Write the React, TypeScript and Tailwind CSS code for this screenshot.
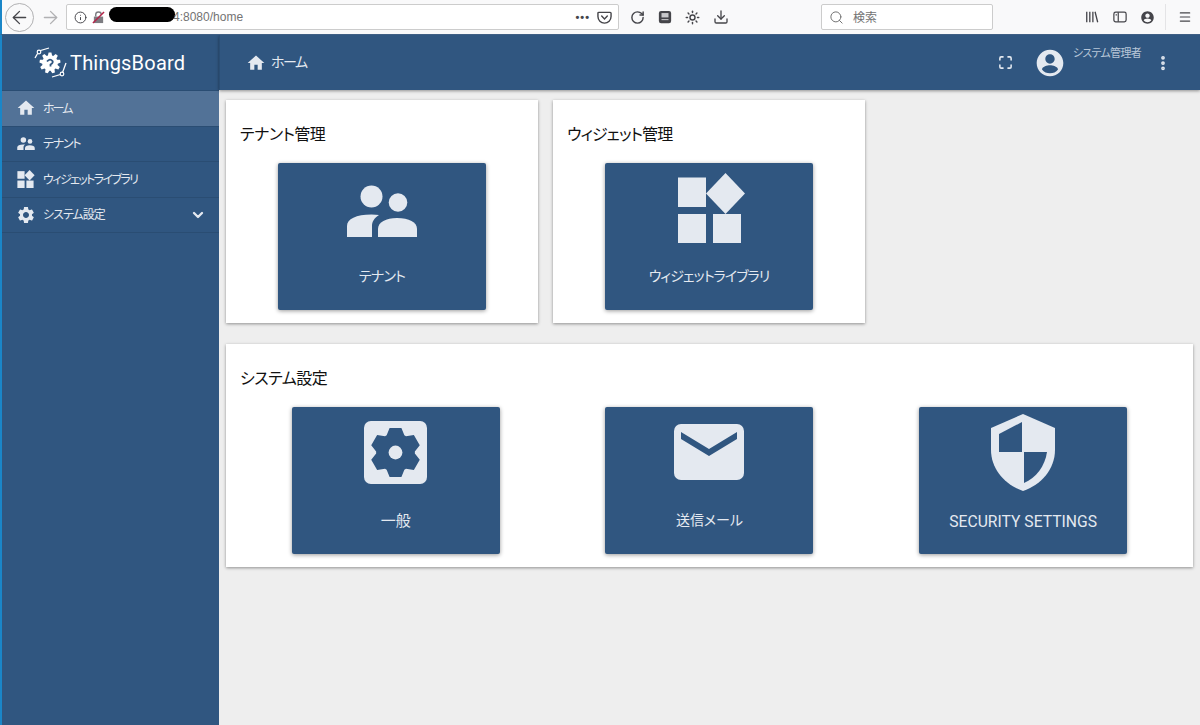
import { ChevronDown, Download, Info, RotateCw, Search, ArrowLeft, ArrowRight, Menu, EllipsisVertical, Maximize, Sun } from "lucide-react";

const font = "font-['Roboto','Noto_Sans_CJK_JP',sans-serif] [font-feature-settings:'palt']";

// gear outline with flat teeth, used by the logo and the "general" tile
const gearPath = (cx: number, cy: number, outer: number, inner: number, teeth: number, half: number) => {
  const pts: string[] = [];
  for (let i = 0; i < teeth; i++) {
    const a = (i * 2 * Math.PI) / teeth - Math.PI / 2;
    [
      [-half * 1.5, inner],
      [-half, outer],
      [half, outer],
      [half * 1.5, inner],
    ].forEach(([o, r]) => {
      pts.push(`${(cx + Math.cos(a) * r - Math.sin(a) * o).toFixed(2)} ${(cy + Math.sin(a) * r + Math.cos(a) * o).toFixed(2)}`);
    });
  }
  return `M${pts.join("L")}Z`;
};

const HomeIcon = ({ className }: { className: string }) => (
  <svg viewBox="0 0 24 24" className={className} fill="currentColor">
    <path d="M10 20v-6h4v6h5v-8h3L12 3 2 12h3v8z" />
  </svg>
);

const PeopleIcon = ({ className }: { className: string }) => (
  <svg viewBox="0 0 70 52" className={className} fill="currentColor">
    <circle cx="24.500" cy="11.500" r="11" />
    <circle cx="51" cy="17.500" r="9.300" />
    <path d="M0 52V41C0 34 9 29.500 24.500 29.500 Q29 29.500 32 30 C27 33 25 37 25 41V52Z" />
    <path d="M31 52V44C31 37 39 33 50 33 C62 33 70 37 70 44V52Z" />
  </svg>
);

const WidgetsIcon = ({ className }: { className: string }) => (
  <svg viewBox="0 0 67 70" className={className} fill="currentColor">
    <rect x="0" y="4.500" width="28" height="29.500" />
    <path d="M47.500 0 67 20.500 47.500 41 28 20.500Z" />
    <rect x="0" y="41" width="28" height="29" />
    <rect x="35" y="41" width="28" height="29" />
  </svg>
);

const GearIcon = ({ className }: { className: string }) => (
  <svg viewBox="0 0 24 24" className={className} fill="currentColor">
    <path d="M19.14 12.94c.04-.3.06-.61.06-.94 0-.32-.02-.64-.07-.94l2.03-1.58c.18-.14.23-.41.12-.61l-1.92-3.32c-.12-.22-.37-.29-.59-.22l-2.39.96c-.5-.38-1.03-.7-1.62-.94l-.36-2.54c-.04-.24-.24-.41-.48-.41h-3.84c-.24 0-.43.17-.47.41l-.36 2.54c-.59.24-1.13.57-1.62.94l-2.39-.96c-.22-.08-.47 0-.59.22L2.74 8.87c-.12.21-.08.47.12.61l2.03 1.58c-.05.3-.09.63-.09.94s.02.64.07.94l-2.03 1.58c-.18.14-.23.41-.12.61l1.92 3.32c.12.22.37.29.59.22l2.39-.96c.5.38 1.03.7 1.62.94l.36 2.54c.05.24.24.41.48.41h3.84c.24 0 .44-.17.47-.41l.36-2.54c.59-.24 1.13-.56 1.62-.94l2.39.96c.22.08.47 0 .59-.22l1.92-3.32c.12-.22.07-.47-.12-.61l-2.01-1.58zM12 15.6c-1.98 0-3.6-1.62-3.6-3.6s1.62-3.600 3.6-3.600 3.600 1.620 3.600 3.600-1.620 3.600-3.600 3.600z" />
  </svg>
);

const GeneralIcon = ({ className }: { className: string }) => (
  <svg viewBox="0 0 64 64" className={className}>
    <rect width="64" height="64" rx="7" fill="#e4e9f0" />
    <path d={gearPath(32, 32, 25, 17.500, 6, 6)} fill="#305680" />
    <circle cx="32" cy="32" r="7" fill="#e4e9f0" />
  </svg>
);

const MailIcon = ({ className }: { className: string }) => (
  <svg viewBox="0 0 70 56" className={className}>
    <rect width="70" height="56" rx="7" fill="#e4e9f0" />
    <path d="M7 8 35 25 63 8V15L35 32 7 15Z" fill="#305680" />
  </svg>
);

const ShieldIcon = ({ className }: { className: string }) => (
  <svg viewBox="0 0 64 77" className={className}>
    <path d="M32 0 64 14V36C64 55 50 71 32 77 14 71 0 55 0 36V14Z" fill="#e4e9f0" />
    <path d="M31 8V38H8V20Z" fill="#305680" />
    <path d="M33 38H56C54 52 45 64 33 69Z" fill="#305680" />
  </svg>
);

const AccountIcon = ({ className }: { className: string }) => (
  <svg viewBox="0 0 24 24" className={className} fill="currentColor">
    <path d="M12 2C6.480 2 2 6.480 2 12s4.480 10 10 10 10-4.480 10-10S17.520 2 12 2zm0 3.500c1.930 0 3.500 1.570 3.500 3.500s-1.570 3.500-3.500 3.500S8.500 10.930 8.500 9s1.570-3.500 3.500-3.500zm0 14.200a7.700 7.700 0 0 1-6-2.900c.03-2 4-3.100 6-3.100s5.970 1.100 6 3.100a7.700 7.700 0 0 1-6 2.900z" />
  </svg>
);

const Logo = () => (
  <svg viewBox="0 0 33 32" className="w-[33px] h-[32px] text-white" fill="none" stroke="currentColor">
    <path d={gearPath(16, 16, 10.500, 7.500, 9, 1.400)} fill="currentColor" stroke="none" />
    <path d="M13 14.500Q16 11 18.500 14 19.500 16 16.500 17.500V19.500" stroke="#305680" strokeWidth="1.800" />
    <path d="M1 11 5 4 15 1" strokeWidth="1.300" />
    <circle cx="5" cy="5" r="1.800" strokeWidth="1.200" fill="#305680" />
    <path d="M32 16 28 27 18 30" strokeWidth="1.300" />
    <circle cx="28" cy="27" r="1.800" strokeWidth="1.200" fill="#305680" />
  </svg>
);

const Chrome = () => (
  <div className="h-[35px] bg-[#f9f9fa] flex items-center text-[#45454a] shrink-0 relative border-l-[2px] border-b border-[#1a86c8] border-b-[#3f5f85]">
    <div className="w-[64px] flex items-center pl-[3px] gap-[6px] shrink-0">
      <div className="w-[29px] h-[29px] rounded-full border border-[#b1b1b3] bg-[#f9f9fa] flex items-center justify-center">
        <ArrowLeft className="w-[21px] h-[21px]" strokeWidth={1.500} />
      </div>
      <ArrowRight className="w-[21px] h-[21px] text-[#b1b1b3]" strokeWidth={1.500} />
    </div>
    <div className="w-[553px] h-[26px] bg-white border border-[#ccc] rounded-[2px] flex items-center pl-[7px] pr-[5px] shrink-0 relative">
      <Info className="w-[13px] h-[13px]" strokeWidth={1.800} />
      <svg viewBox="0 0 14 14" className="w-[13px] h-[13px] ml-[5px]">
        <path d="M2 6h10v7H2z" fill="#7d7d82" />
        <path d="M4 6V4a3 3 0 0 1 6 0" fill="none" stroke="#7d7d82" strokeWidth="1.500" />
        <path d="M1 13 13 1" stroke="#b3254a" strokeWidth="1.600" />
      </svg>
      <span className="ml-[68px] text-[12px] text-[#737373] font-['Liberation_Sans',sans-serif]">4:8080/home</span>
      <div className="absolute left-[42px] top-[2px] w-[66px] h-[15px] rounded-full bg-black" />
      <span className="ml-auto text-[11px] tracking-[1px] font-bold leading-none font-['Liberation_Sans',sans-serif]">•••</span>
      <svg viewBox="0 0 16 16" className="w-[15px] h-[15px] ml-[7px] mr-[1px]" fill="none" stroke="currentColor" strokeWidth="1.500">
        <path d="M2 2.500h12a1 1 0 0 1 1 1V7a7 7 0 0 1-14 0V3.500a1 1 0 0 1 1-1z" />
        <path d="M5 6.500 8 9.500 11 6.500" strokeLinecap="round" />
      </svg>
    </div>
    <div className="flex items-center w-[202px] pl-[11px] gap-[13px] shrink-0">
      <RotateCw className="w-[15px] h-[15px]" strokeWidth={2.300} />
      <svg viewBox="0 0 16 16" className="w-[14px] h-[14px]">
        <rect x="1" y="1" width="14" height="14" rx="2.500" fill="#45454a" />
        <rect x="4" y="3.500" width="8" height="5" fill="#c9c9cc" />
        <path d="M4 11h8" stroke="#c9c9cc" strokeWidth="1.200" />
      </svg>
      <Sun className="w-[15px] h-[15px]" strokeWidth={2.300} />
      <Download className="w-[16px] h-[16px]" strokeWidth={2} />
    </div>
    <div className="w-[172px] h-[26px] bg-white border border-[#ccc] rounded-[2px] flex items-center pl-[7px] gap-[9px] shrink-0">
      <Search className="w-[15px] h-[15px] text-[#737373]" strokeWidth={1.600} />
      <span className="text-[12px] text-[#737373] font-['Noto_Sans_CJK_JP',sans-serif]">検索</span>
    </div>
    <div className="flex-1 flex items-center pl-[92px]">
      <svg viewBox="0 0 16 16" className="w-[14px] h-[14px]" fill="none" stroke="currentColor" strokeWidth="1.500">
        <path d="M2 2v12M5.500 2v12M9 2v12M11.500 2l3 12" />
      </svg>
      <svg viewBox="0 0 16 16" className="w-[14px] h-[14px] ml-[14px]" fill="none" stroke="currentColor" strokeWidth="1.400">
        <rect x="1" y="2.500" width="14" height="11" rx="2" />
        <path d="M6 2.500v11M3 5.500h1.500" />
      </svg>
      <AccountIcon className="w-[15px] h-[15px] ml-[13px]" />
      <div className="w-px h-[26px] bg-[#e4e4e6] ml-[10px]" />
      <Menu className="w-[14px] h-[14px] ml-[12px]" strokeWidth={2} />
    </div>
  </div>
);

const navItems = [
  { label: "ホーム", icon: <HomeIcon className="w-[20px] h-[20px]" />, active: true, track: "tracking-[-2px]" },
  { label: "テナント", icon: <PeopleIcon className="w-[18px] h-[13px]" />, track: "tracking-[-1.200px]" },
  { label: "ウィジェットライブラリ", icon: <WidgetsIcon className="w-[18px] h-[18px]" />, track: "tracking-[-1.600px]" },
  { label: "システム設定", icon: <GearIcon className="w-[20px] h-[20px]" />, chevron: true, track: "tracking-[-1px]" },
];

const Sidebar = () => (
  <div className="w-[219px] shrink-0 bg-[#305680] border-l-[2px] border-[#1a86c8] flex flex-col">
    <div className="h-[56px] flex items-center pl-[32px] gap-[3px] border-b border-[#2a4d73]">
      <Logo />
      <span className="text-[20px] text-white font-['Roboto',sans-serif] tracking-[0.2px]">ThingsBoard</span>
    </div>
    {navItems.map((item) => (
      <div
        key={item.label}
        className={`h-[35.500px] flex items-center pl-[14px] pr-[13px] border-b border-[#2a4d73] text-[#e4e9f0] ${
          item.active ? "bg-[#527297]" : ""
        }`}
      >
        <div className="w-[20px] flex justify-center">{item.icon}</div>
        <span className={`ml-[7px] pt-[1px] text-[12px] ${item.track}`}>{item.label}</span>
        {item.chevron && <ChevronDown className="ml-auto w-[16px] h-[16px]" strokeWidth={3.500} />}
      </div>
    ))}
  </div>
);

const Tile = ({ label, icon, labelClass }: { label: string; icon: React.ReactNode; labelClass: string }) => (
  <div className="w-[208px] h-[147px] bg-[#305680] rounded-[2px] shadow-[0_1px_4px_rgba(0,0,0,0.4)] flex flex-col items-center text-[#e4e9f0]">
    <div className="h-[90px] flex items-center justify-center">{icon}</div>
    <span className={`mt-[13px] font-['Roboto','Noto_Sans_CJK_JP',sans-serif] ${labelClass}`}>{label}</span>
  </div>
);

const Card = ({ title, className, titleClass, children }: { title: string; className: string; titleClass: string; children: React.ReactNode }) => (
  <div className={`h-[223px] bg-white shadow-[0_1px_3px_rgba(0,0,0,0.4)] flex flex-col ${className}`}>
    <h2 className={`h-[63px] pl-[14px] pt-[6px] flex items-center text-[16px] text-[#111] ${titleClass}`}>{title}</h2>
    {children}
  </div>
);

export default function App() {
  return (
    <div className={`w-[1200px] h-[725px] flex flex-col overflow-hidden bg-[#eee] ${font}`}>
      <Chrome />
      <div className="flex-1 flex min-h-0">
        <Sidebar />
        <div className="flex-1 flex flex-col min-w-0">
          <div className="h-[55px] shrink-0 bg-[#305680] shadow-[0_1px_3px_rgba(0,0,0,0.4)] border-l border-[#2a4d73] flex items-center pl-[26px] text-[#e4e9f0]">
            <HomeIcon className="w-[20px] h-[20px]" />
            <span className="ml-[5px] text-[14px] tracking-[-1.500px]">ホーム</span>
            <Maximize className="ml-auto w-[15px] h-[15px]" strokeWidth={2.500} />
            <AccountIcon className="ml-[21px] w-[32px] h-[32px]" />
            <span className="ml-[7px] self-start mt-[11px] text-[11px] tracking-[-0.700px] text-[#b8c6d8]">システム管理者</span>
            <EllipsisVertical className="ml-[13px] mr-[28px] w-[18px] h-[18px]" strokeWidth={3} />
          </div>
          <div className="flex-1 pl-[7px] pr-[7px] pt-[10px] flex flex-col gap-[21px]">
            <div className="flex gap-[15px]">
              <Card title="テナント管理" className="w-[312px]" titleClass="tracking-[-0.500px]">
                <div className="flex justify-center">
                  <Tile label="テナント" labelClass="text-[14px] tracking-[-0.700px]" icon={<PeopleIcon className="w-[70px] h-[52px] mt-[5px]" />} />
                </div>
              </Card>
              <Card title="ウィジェット管理" className="w-[312px]" titleClass="tracking-[-0.900px]">
                <div className="flex justify-center">
                  <Tile label="ウィジェットライブラリ" labelClass="text-[14px] tracking-[-0.900px]" icon={<WidgetsIcon className="w-[67px] h-[70px] ml-[5px]" />} />
                </div>
              </Card>
            </div>
            <Card title="システム設定" className="w-[967px]" titleClass="tracking-[-0.500px]">
              <div className="grid grid-cols-3 px-[13px] justify-items-center">
                <Tile label="一般" labelClass="text-[15px]" icon={<GeneralIcon className="w-[63px] h-[63px]" />} />
                <Tile label="送信メール" labelClass="text-[14px]" icon={<MailIcon className="w-[70px] h-[56px]" />} />
                <Tile label="SECURITY SETTINGS" labelClass="text-[15.700px]" icon={<ShieldIcon className="w-[64px] h-[77px]" />} />
              </div>
            </Card>
          </div>
        </div>
      </div>
    </div>
  );
}
